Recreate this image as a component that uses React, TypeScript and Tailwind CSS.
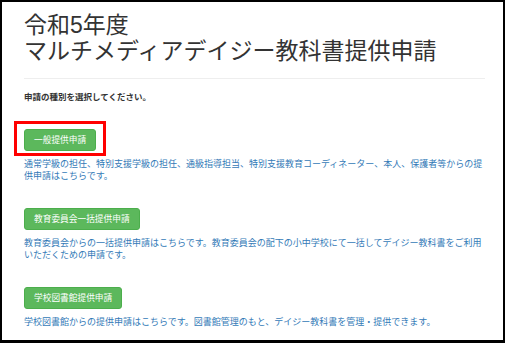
const FONT = '"Liberation Sans", "Noto Sans CJK JP", sans-serif'

type Option = {
  label: string
  lines: string[]
  highlight?: boolean
}

const OPTIONS: Option[] = [
  {
    label: '一般提供申請',
    lines: [
      '通常学級の担任、特別支援学級の担任、通級指導担当、特別支援教育コーディネーター、本人、保護者等からの提',
      '供申請はこちらです。',
    ],
    highlight: true,
  },
  {
    label: '教育委員会一括提供申請',
    lines: [
      '教育委員会からの一括提供申請はこちらです。教育委員会の配下の小中学校にて一括してデイジー教科書をご利用',
      'いただくための申請です。',
    ],
  },
  {
    label: '学校図書館提供申請',
    lines: ['学校図書館からの提供申請はこちらです。図書館管理のもと、デイジー教科書を管理・提供できます。'],
  },
]

function OptionBlock({ option }: { option: Option }) {
  return (
    <div className="mt-[26px]">
      <div className="relative w-fit">
        <button className="block h-[22px] rounded-[3px] border border-[#4cae4c] bg-[#5cb85c] px-[9px] text-[8.7px] leading-none text-white">
          {option.label}
        </button>
        {option.highlight && (
          <div className="pointer-events-none absolute -left-[10px] -right-[10px] -top-[8px] -bottom-[5px] border-[3px] border-[#ff0000]" />
        )}
      </div>
      <p className="mt-[8px] whitespace-nowrap text-[9px] leading-[11.5px] text-[#337ab7]">
        {option.lines.map((l, i) => (
          <span key={i} className="block">
            {l}
          </span>
        ))}
      </p>
    </div>
  )
}

export default function App() {
  return (
    <div
      className="h-[343px] w-[505px] overflow-hidden border-2 border-b-[3px] border-black bg-white"
      style={{ fontFamily: FONT }}
    >
      <div className="pl-[22px] pr-[18px] pt-[10px]">
        <h1 className="text-[23px] font-normal leading-[26px] text-[#333]">
          令和5年度
          <br />
          マルチメディアデイジー教科書提供申請
        </h1>
        <hr className="mt-[14px] border-t border-[#eee]" />
        <p className="mt-[12px] text-[8.5px] font-bold leading-[12px] text-[#333]">
          申請の種別を選択してください。
        </p>
        {OPTIONS.map((o) => (
          <OptionBlock key={o.label} option={o} />
        ))}
      </div>
    </div>
  )
}
